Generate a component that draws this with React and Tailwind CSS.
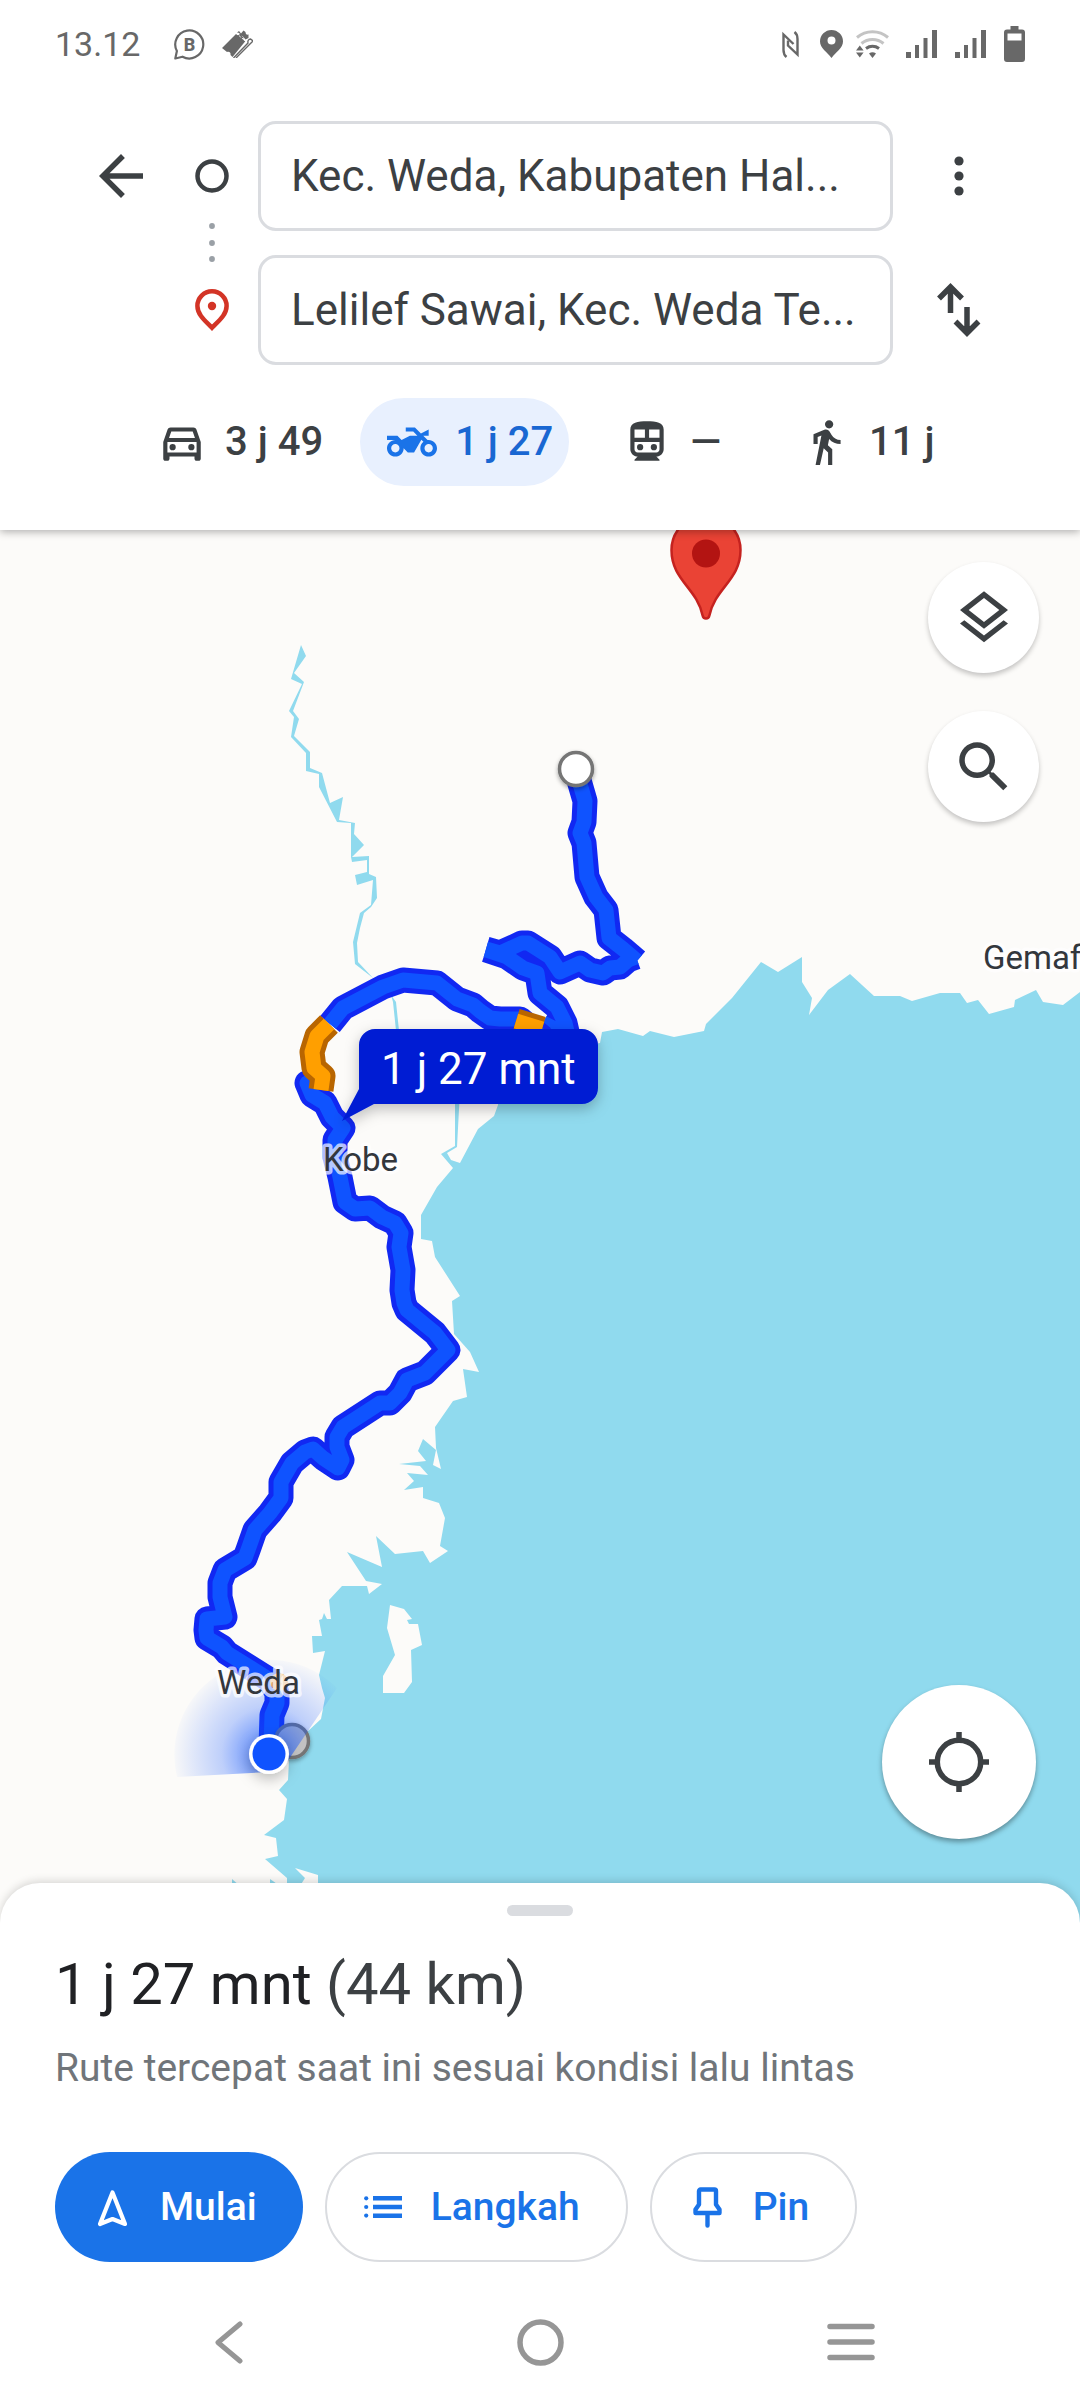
import React from "react";

const ICONS = {
  back: "M20 11H7.83l5.59-5.59L12 4l-8 8 8 8 1.41-1.41L7.83 13H20v-2z",
  car: "M18.92 6.01C18.72 5.42 18.16 5 17.5 5h-11c-.66 0-1.21.42-1.42 1.01L3 12v8c0 .55.45 1 1 1h1c.55 0 1-.45 1-1v-1h12v1c0 .55.45 1 1 1h1c.55 0 1-.45 1-1v-8l-2.08-5.99zM6.85 7h10.29l1.08 3.11H5.77L6.85 7zM19 17H5v-5h14v5zM7.5 13a1.5 1.5 0 1 0 0 3 1.5 1.5 0 0 0 0-3zM16.5 13a1.5 1.5 0 1 0 0 3 1.5 1.5 0 0 0 0-3z",
  bike: "M20 11c-.18 0-.36.03-.53.05L17.41 9H20V6l-3.72 1.86L13.41 5H9v2h3.59l2 2H11l-4 2-2-2H0v2h4c-2.21 0-4 1.79-4 4s1.79 4 4 4 4-1.79 4-4l2 2h3l3.49-6.1 1.01 1.01c-.91.73-1.5 1.84-1.5 3.09 0 2.21 1.79 4 4 4s4-1.79 4-4-1.79-4-4-4zM4 17c-1.1 0-2-.9-2-2s.9-2 2-2 2 .9 2 2-.9 2-2 2zm16 0c-1.1 0-2-.9-2-2s.9-2 2-2 2 .9 2 2-.9 2-2 2z",
  train: "M12 2c-4.42 0-8 .5-8 4v9.5C4 17.43 5.57 19 7.5 19L6 20.5v.5h12v-.5L16.5 19c1.93 0 3.5-1.57 3.5-3.5V6c0-3.5-3.58-4-8-4zM6 6h5v4H6zM13 6h5v4h-5zM6 12h12v3.5c0 .83-.67 1.5-1.5 1.5h-9c-.83 0-1.5-.67-1.5-1.5zM8.7 13a1.5 1.5 0 1 0 0 3 1.5 1.5 0 0 0 0-3zM15.3 13a1.5 1.5 0 1 0 0 3 1.5 1.5 0 0 0 0-3z",
  walk: "M13.5 5.5c1.1 0 2-.9 2-2s-.9-2-2-2-2 .9-2 2 .9 2 2 2zM9.8 8.9L7 23h2.1l1.8-8 2.1 2v6h2v-7.5l-2.1-2 .6-3C14.8 12 16.8 13 19 13v-2c-1.9 0-3.5-1-4.3-2.4l-1-1.6c-.4-.6-1-1-1.7-1-.3 0-.5.1-.8.1L6 8.3V13h2V9.6l1.8-.7",
  layers: "M11.99 18.54l-7.37-5.73L3 14.07l9 7 9-7-1.63-1.27zM12 16l7.36-5.73L21 9l-9-7-9 7 1.63 1.27L12 16zm0-11.47L17.74 9 12 13.47 6.26 9 12 4.53z",
  search: "M15.5 14h-.79l-.28-.27C15.41 12.59 16 11.11 16 9.5 16 5.91 13.09 3 9.5 3S3 5.91 3 9.5 5.91 16 9.5 16c1.61 0 3.09-.59 4.23-1.57l.27.28v.79l5 4.99L20.49 19l-4.99-5zm-6 0C7.01 14 5 11.99 5 9.5S7.01 5 9.5 5 14 7.01 14 9.5 11.99 14 9.5 14z",
};

function Icon({ name, className }) {
  return (
    <svg viewBox="0 0 24 24" fill="currentColor" fillRule="evenodd" className={className} aria-hidden="true">
      <path d={ICONS[name]} />
    </svg>
  );
}

function Signal() {
  return (
    <svg viewBox="0 0 31 28" fill="currentColor" className="h-7 w-[31px]" aria-hidden="true">
      <path d="M0 22h5v6H0zM9 15h4v13H9zM17.500 8h4v20h-4zM26 0h5v28h-5z" />
    </svg>
  );
}

function StatusBar() {
  return (
    <div className="flex h-[88px] items-center justify-between pr-[55px] pl-[55px] text-[#686868]">
      <div className="flex items-center">
        <span className="text-[34px] leading-10">13.12</span>
        <svg viewBox="0 0 31 31" className="ml-[34px] size-[31px]" aria-hidden="true">
          <path d="M1.300 29.500l1.600-7.500a14 14 0 1 1 5.600 5.700z" fill="none" stroke="currentColor" strokeWidth="2.200" strokeLinejoin="round" />
          <text x="15.500" y="22" textAnchor="middle" fontSize="18" fontWeight="800" fill="currentColor">B</text>
        </svg>
        <svg viewBox="0 0 31 28" className="ml-[17px] h-7 w-[31px]" fill="currentColor" aria-hidden="true">
          <path d="M0 18L14 4c1 1.500 3 1.500 4 0l3.500 3.500c-1 1.500 0 3.500 2 3.500L10.500 27l-2-2c.5-2-1-4-3.500-3z" />
          <path d="M15 2.500L17 1l2 2.500L21.500 .5l2 1.500c0 2 1 3 3 2.500v3.500l-3 1.500-3-3.500c-2 0-3.500-1.500-3-3z" />
          <path d="M11.500 28L26 13c-.5-2 .5-4 2.500-4L31 11 14 28" fill="none" stroke="currentColor" strokeWidth="1.400" />
          <path d="M14.500 3.500l10.500 9" stroke="#fff" strokeWidth="1" strokeDasharray="2 1.500" />
        </svg>
      </div>
      <div className="flex items-center">
        <svg viewBox="0 0 17 27" className="h-[27px] w-[17px]" fill="none" stroke="currentColor" strokeWidth="2.400" aria-hidden="true">
          <path d="M4.500 26C2 24 1.500 22 1.500 19V3.500L11.500 13" />
          <path d="M12.500 1C15 3 15.500 5 15.500 8v15.500L6 14.500V9.500" />
        </svg>
        <svg viewBox="0 0 23 28" className="ml-[21px] h-7 w-[23px]" fill="currentColor" fillRule="evenodd" aria-hidden="true">
          <path d="M11.500 28C7 22 0 18 0 11.500a11.500 11.500 0 0 1 23 0C23 18 16 22 11.500 28zM11.500 6.500a4 4 0 1 0 0 8 4 4 0 0 0 0-8z" />
        </svg>
        <svg viewBox="0 0 33 28" className="ml-[13px] h-7 w-[33px]" fill="none" strokeWidth="3" aria-hidden="true">
          <path d="M1 7.500a24 24 0 0 1 31 0M5.500 13.500a17 17 0 0 1 22 0" stroke="#c4c4c4" />
          <path d="M10 18.500a11 11 0 0 1 13 0" stroke="currentColor" />
          <path d="M13 23.500q3.500-2.500 7 0L16.500 28zM0 20.500l3.800-5 3.800 5zM0 22.500h7.600l-3.800 5z" fill="currentColor" />
        </svg>
        <div className="ml-[17px] flex gap-[18px]">
          <Signal />
          <Signal />
        </div>
        <svg viewBox="0 0 21 36" className="ml-[18px] h-9 w-[21px]" fill="currentColor" fillRule="evenodd" aria-hidden="true">
          <path d="M6.500 0h8v3.500H18a3 3 0 0 1 3 3V33a3 3 0 0 1-3 3H3a3 3 0 0 1-3-3V6.500a3 3 0 0 1 3-3h3.500zM3.500 7.500v7h14v-7z" />
        </svg>
      </div>
    </div>
  );
}

function PlaceInput({ label, value }) {
  return (
    <input
      aria-label={label}
      defaultValue={value}
      className="h-[110px] w-full min-w-0 rounded-[18px] border-3 border-[#dadce0] bg-white px-[30px] text-[44px] text-[#3c4043] outline-none"
    />
  );
}

function Directions() {
  return (
    <form className="mt-[33px] grid grid-cols-[90px_92px_1fr_132px] gap-y-6 pr-[55px] pl-[76px]" onSubmit={(e) => e.preventDefault()}>
      <button type="button" aria-label="Kembali" className="flex items-center justify-center">
        <Icon name="back" className="size-[66px]" />
      </button>
      <div className="row-span-2 flex flex-col items-center pt-[38px]">
        <svg viewBox="0 0 34 34" className="size-[34px]" aria-hidden="true">
          <circle cx="17" cy="17" r="14.500" fill="none" stroke="currentColor" strokeWidth="4.500" />
        </svg>
        <svg viewBox="0 0 6 39" className="mt-[30px] h-[39px] w-1.5" fill="#9aa0a6" aria-hidden="true">
          <circle cx="3" cy="3" r="2.900" />
          <circle cx="3" cy="20" r="2.900" />
          <circle cx="3" cy="36" r="2.900" />
        </svg>
        <svg viewBox="0 0 34 42" className="mt-[27px] h-[42px] w-[34px]" aria-hidden="true">
          <path d="M17 38.800C11 32.500 2.400 26 2.400 16.900a14.600 14.600 0 0 1 29.200 0C31.600 26 23 32.500 17 38.800z" fill="none" stroke="#d33426" strokeWidth="4.500" />
          <circle cx="17" cy="17" r="4.200" fill="#d33426" />
        </svg>
      </div>
      <PlaceInput label="Tempat asal" value="Kec. Weda, Kabupaten Hal..." />
      <button type="button" aria-label="Opsi lainnya" className="flex items-center justify-center">
        <svg viewBox="0 0 10 40" className="h-10 w-2.5" fill="currentColor" aria-hidden="true">
          <circle cx="5" cy="5" r="4.600" />
          <circle cx="5" cy="20" r="4.600" />
          <circle cx="5" cy="35" r="4.600" />
        </svg>
      </button>
      <span />
      <PlaceInput label="Tujuan" value="Lelilef Sawai, Kec. Weda Te..." />
      <button type="button" aria-label="Tukar asal dan tujuan" className="flex items-center justify-center">
        <svg viewBox="0 0 44 54" className="h-[54px] w-11" fill="none" stroke="currentColor" strokeWidth="5.500" aria-hidden="true">
          <path d="M13.500 30V5M2 15.500L13.500 4 25 15.500M30 24v25M18.500 38.500L30 50l11.500-11.500" />
        </svg>
      </button>
    </form>
  );
}

const modes = [
  { icon: "car", text: "3 j 49", name: "Mobil", style: "px-[27px]" },
  { icon: "bike", text: "1 j 27", name: "Motor", active: true, style: "bg-[#e8f0fe] pr-4 pl-[27px] text-[#1a73e8]" },
  { icon: "train", text: "—", name: "Transportasi umum", style: "mx-4 px-[27px]" },
  { icon: "walk", text: "11 j", name: "Jalan kaki", style: "px-[27px]" },
];

function Modes() {
  return (
    <div className="mt-[33px] flex gap-2.5 pl-[130px]">
      {modes.map((m) => (
        <button
          key={m.icon}
          type="button"
          title={m.name}
          aria-pressed={!!m.active}
          className={"flex h-[88px] items-center gap-[18px] rounded-full text-[40px] font-medium whitespace-nowrap " + m.style}
        >
          <Icon name={m.icon} className="size-[50px]" />
          <span className={m.active ? "text-[#1967d2]" : ""}>{m.text}</span>
        </button>
      ))}
    </div>
  );
}

const WATER =
  "287,1960 287,1878 265,1859 278,1856 276,1838 264,1835 284,1820 287,1799 279,1790 288,1780 289,1760 295,1747 307,1732 321,1719 325,1698 322,1688 319,1675 325,1651 313,1653 312,1636 322,1636 319,1620 322,1619 324,1613 327,1619 331,1619 329,1600 342,1586 367,1586 369,1594 382,1584 366,1581 347,1552 382,1567 376,1536 395,1554 423,1551 430,1563 448,1551 440,1546 445,1518 439,1503 423,1498 423,1487 404,1490 414,1481 407,1473 428,1475 420,1466 399,1464 426,1461 418,1451 423,1439 436,1450 433,1465 441,1469 436,1448 435,1427 453,1401 467,1397 463,1369 479,1372 470,1352 454,1334 452,1301 460,1296 435,1257 432,1241 421,1239 421,1215 437,1187 453,1168 441,1154 455,1146 455,1090 460,1090 457,1147 447,1153 451,1160 460,1163 478,1129 494,1116 498,1105 500,1060 600,1043 602,1032 618,1029 643,1036 650,1031 674,1037 704,1031 706,1024 732,998 761,962 778,972 802,957 802,982 812,998 809,1015 828,990 850,974 874,996 900,996 912,1001 940,993 960,993 967,1003 978,1000 989,1014 1014,1007 1015,1000 1036,990 1043,1002 1063,1005 1080,992 1400,960 1400,1960";
const RIVER =
  "301,645 306,656 294,673 304,682 293,711 299,719 294,736 310,752 310,768 322,773 330,803 343,797 339,820 355,823 354,834 364,845 352,857 369,856 369,874 376,877 377,898 371,907 364,913 360,928 357,943 358,962 373,978 355,964 353,942 360,913 371,905 373,880 357,885 355,875 367,872 367,860 352,862 351,857 351,823 337,822 319,787 319,774 306,771 306,753 291,737 294,717 289,711 302,684 291,679";
const ISLAND =
  "390,1605 404,1609 412,1619 407,1620 409,1624 418,1624 422,1645 411,1650 412,1682 404,1693 383,1693 383,1676 395,1655 387,1628";

const ROUTE_END =
  "M576,770 L585,801 584,822 580,833 584,843 587,877 596,897 606,910 609,938 623,949 637,961 M636,957 L628,960 620,967 610,968 603,973 590,970 580,963 560,972 550,957 528,943 522,943 500,953 486,949 M486,950 L507,957 523,968 537,973 540,993 557,1007 565,1023 568,1036 543,1023";
const ROUTE_MID =
  "M543,1038 L520,1019 500,1019 490,1018 480,1011 473,1005 457,999 437,983 403,980 383,987 343,1008 330,1024";
const ROUTE_START =
  "M323,1077 L307,1083 312,1095 325,1103 332,1117 343,1128 335,1140 335,1157 340,1177 345,1202 355,1209 370,1208 382,1217 395,1223 401,1233 399,1247 403,1270 402,1290 404,1303 407,1310 435,1333 448,1350 425,1373 407,1380 400,1393 390,1403 380,1403 343,1427 337,1437 337,1447 342,1460 338,1468 323,1458 313,1449 305,1452 292,1463 281,1482 281,1498 270,1513 255,1530 248,1550 245,1558 225,1570 220,1583 220,1597 225,1617 207,1619 206,1630 207,1638 222,1647 227,1653 270,1680 277,1693 277,1703 272,1715 271,1747";

function RouteLine({ d, outer, inner }) {
  return (
    <g fill="none" strokeLinejoin="round">
      <path d={d} stroke={outer} strokeWidth="25" />
      <path d={d} stroke={inner} strokeWidth="15" />
    </g>
  );
}

function MapLabel({ x, y, children }) {
  return (
    <text x={x} y={y} fontSize="33" fill="#33373d" stroke="#ffffff" strokeOpacity="0.7" strokeWidth="7" strokeLinejoin="round" paintOrder="stroke">
      {children}
    </text>
  );
}

function MapCanvas() {
  return (
    <svg viewBox="0 530 1080 1393" preserveAspectRatio="xMidYMin slice" className="absolute inset-0 size-full" role="img" aria-label="Peta rute">
      <defs>
        <radialGradient id="beam" gradientUnits="userSpaceOnUse" cx="269" cy="1754" r="95">
          <stop offset="0.150" stopColor="#0f53ff" stopOpacity="0.600" />
          <stop offset="0.500" stopColor="#0f53ff" stopOpacity="0.260" />
          <stop offset="1" stopColor="#0f53ff" stopOpacity="0.020" />
        </radialGradient>
        <filter id="soft" x="-30%" y="-30%" width="160%" height="170%">
          <feDropShadow dx="0" dy="5" stdDeviation="7" floodColor="#000" floodOpacity="0.250" />
        </filter>
        <filter id="tight" x="-30%" y="-30%" width="160%" height="160%">
          <feDropShadow dx="0" dy="2" stdDeviation="2" floodColor="#000" floodOpacity="0.350" />
        </filter>
      </defs>
      <rect x="-400" y="530" width="1900" height="1500" fill="#fcfbf9" />
      <g fill="#90daee">
        <polygon points={WATER} />
        <polygon points={RIVER} />
        <polygon points="391,995 396,1002 400,1040 397,1040 393,1002" />
        <polygon points="232,1879 240,1886 232,1886" />
        <polygon points="270,1879 280,1886 270,1886" />
      </g>
      <g fill="#fcfbf9">
        <polygon points={ISLAND} />
        <polygon points="295,1868 318,1875 318,1886 300,1886 305,1878" />
      </g>
      <RouteLine d={ROUTE_END} outer="#1128f2" inner="#0f53ff" />
      <RouteLine d={ROUTE_MID} outer="#1128f2" inner="#0f53ff" />
      <RouteLine d={ROUTE_START} outer="#1128f2" inner="#0f53ff" />
      <RouteLine d="M329,1024 L317,1036 312,1052 314,1068 323,1076 321,1090" outer="#b86500" inner="#ff9f00" />
      <RouteLine d="M516,1021 L542,1029" outer="#b86500" inner="#ff9f00" />
      <circle cx="279" cy="1682" r="9" fill="#ffa940" />
      <g filter="url(#tight)">
        <circle cx="292" cy="1741" r="16.500" fill="#c2c2c2" stroke="#757575" strokeWidth="3.500" />
        <circle cx="576" cy="769" r="16.500" fill="#fff" stroke="#757575" strokeWidth="3.500" />
      </g>
      <path d="M269,1772 L177,1777 A95,95 0 0 1 337,1688 L287,1762 A20,20 0 0 1 269,1772 Z" fill="url(#beam)" />
      <MapLabel x="983" y="969">Gemaf</MapLabel>
      <MapLabel x="323" y="1171">Kobe</MapLabel>
      <MapLabel x="217" y="1694">Weda</MapLabel>
      <g filter="url(#soft)">
        <circle cx="269" cy="1754" r="20" fill="#fff" />
      </g>
      <circle cx="269" cy="1754" r="16.500" fill="#0f53ff" />
      <path d="M706,618.500 q-2.800 0-3.400-3 C697,588 671.500,580 671.500,550 a34.500,34.500 0 0 1 69,0 C740.500,580 715,588 709.400,615.500 q-.6 3-3.400 3z" fill="#ea4335" stroke="#c5221f" strokeWidth="2.500" />
      <circle cx="706" cy="553.500" r="14" fill="#b31412" />
      <path filter="url(#soft)" d="M375,1029 H582 a16,16 0 0 1 16,16 V1088 a16,16 0 0 1 -16,16 H374 L342,1121 L359,1089 V1045 a16,16 0 0 1 16,-16 Z" fill="#051dd3" />
      <text x="381" y="1084" fontSize="44" fill="#fff">1 j 27 mnt</text>
    </svg>
  );
}

function MapSection() {
  return (
    <main className="relative min-h-[600px] flex-1 overflow-hidden text-[#3c4043]">
      <MapCanvas />
      <div className="absolute top-8 right-[41px] flex flex-col gap-[38px]">
        <button type="button" aria-label="Lapisan peta" className="flex size-[111px] items-center justify-center rounded-full bg-white shadow-[0_3px_5px_rgba(0,0,0,0.22)]">
          <Icon name="layers" className="size-16" />
        </button>
        <button type="button" aria-label="Telusuri" className="flex size-[111px] items-center justify-center rounded-full bg-white shadow-[0_3px_5px_rgba(0,0,0,0.22)]">
          <Icon name="search" className="size-[66px]" />
        </button>
      </div>
      <button type="button" aria-label="Lokasi saya" className="absolute right-11 bottom-[84px] flex size-[154px] items-center justify-center rounded-full bg-white shadow-[0_3px_5px_rgba(0,0,0,0.35)]">
        <svg viewBox="0 0 60 60" className="size-[60px]" fill="none" stroke="currentColor" strokeWidth="5.500" aria-hidden="true">
          <circle cx="30" cy="30" r="21.700" />
          <path d="M30 0v8M30 52v8M0 30h8M52 30h8" />
        </svg>
      </button>
    </main>
  );
}

function Sheet() {
  return (
    <section className="relative -mt-10 rounded-t-[40px] bg-white px-[55px] pt-[22px] shadow-[0_-2px_8px_rgba(0,0,0,0.15)]">
      <div className="mx-auto h-[11px] w-[66px] rounded-full bg-[#dadce0]" />
      <h1 className="mt-8 text-[58px] leading-[72px] text-[#202124]">
        1 j 27 mnt <span className="text-[#3c4043]">(44 km)</span>
      </h1>
      <p className="mt-[22px] text-[39px] leading-[52px] text-[#70757a]">Rute tercepat saat ini sesuai kondisi lalu lintas</p>
      <div className="mt-[58px] flex gap-[22px] text-[39px] font-medium">
        <button type="button" className="flex h-[110px] items-center gap-8 rounded-full bg-[#1a73e8] pr-[46px] pl-[42px] text-white">
          <svg viewBox="0 0 31 40" className="h-10 w-[31px]" fill="none" stroke="currentColor" strokeWidth="4.200" strokeLinejoin="round" aria-hidden="true">
            <path d="M15.500 5.500L28 37l-12.500-5L3 37z" />
          </svg>
          Mulai
        </button>
        <button type="button" className="flex h-[110px] items-center gap-[29px] rounded-full border-2 border-[#dadce0] pr-[46px] pl-[37px] text-[#1a73e8]">
          <svg viewBox="0 0 38 22" className="h-[22px] w-[38px]" fill="currentColor" aria-hidden="true">
            <path d="M9 0h29v4.500H9zM9 8.700h29v4.500H9zM9 17.400h29v4.500H9z" />
            <circle cx="2.200" cy="2.300" r="2.100" />
            <circle cx="2.200" cy="11" r="2.100" />
            <circle cx="2.200" cy="19.600" r="2.100" />
          </svg>
          Langkah
        </button>
        <button type="button" className="flex h-[110px] items-center gap-[31px] rounded-full border-2 border-[#dadce0] pr-[46px] pl-[41px] text-[#1a73e8]">
          <svg viewBox="0 0 29 41" className="h-[41px] w-[29px]" fill="none" stroke="currentColor" strokeWidth="4.400" strokeLinejoin="round" strokeLinecap="round" aria-hidden="true">
            <path d="M7.500 2.500h14a1.500 1.500 0 0 1 1.500 1.500V17.500l3.500 5v3.500H2.500v-3.500l3.500-5V4a1.500 1.500 0 0 1 1.500-1.500zM14.500 27v11.500" />
          </svg>
          Pin
        </button>
      </div>
    </section>
  );
}

function NavBar() {
  return (
    <nav className="relative flex items-center justify-between bg-white px-[205px] pt-10 pb-[18px] text-[#969696]">
      <button type="button" aria-label="Kembali" className="flex h-20 w-12 items-center justify-center">
        <svg viewBox="0 0 28 43" className="h-[43px] w-7" fill="none" stroke="currentColor" strokeWidth="5" strokeLinecap="round" strokeLinejoin="round" aria-hidden="true">
          <path d="M25 3L3 21.500 25 40" />
        </svg>
      </button>
      <button type="button" aria-label="Beranda" className="flex h-20 w-12 items-center justify-center">
        <svg viewBox="0 0 47 47" className="size-[47px]" fill="none" stroke="currentColor" strokeWidth="5.500" aria-hidden="true">
          <circle cx="23.500" cy="23.500" r="20.500" />
        </svg>
      </button>
      <button type="button" aria-label="Aplikasi terbaru" className="flex h-20 w-12 items-center justify-center">
        <svg viewBox="0 0 48 38" className="h-[38px] w-12" stroke="currentColor" strokeWidth="5.500" strokeLinecap="round" aria-hidden="true">
          <path d="M3 3.500h42M3 19h42M3 34.500h42" />
        </svg>
      </button>
    </nav>
  );
}

export default function App() {
  return (
    <div className="flex min-h-screen flex-col bg-white font-['Roboto',sans-serif] text-[#3c4043]">
      <header className="relative z-10 bg-white pb-11 shadow-[0_2px_8px_rgba(0,0,0,0.3)]">
        <StatusBar />
        <Directions />
        <Modes />
      </header>
      <MapSection />
      <Sheet />
      <NavBar />
    </div>
  );
}
